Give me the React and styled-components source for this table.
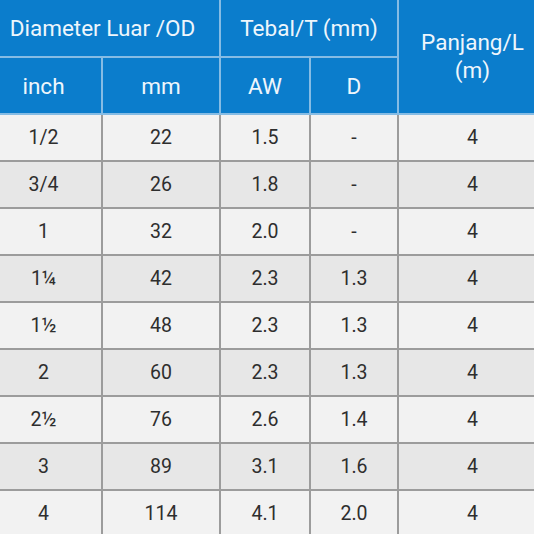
import styled, { createGlobalStyle } from 'styled-components';

const Global = createGlobalStyle`
    html, body {
        margin: 0;
        padding: 0;
        background: #f2f2f2;
        overflow: hidden;
    }
    body {
        font-family: Roboto, "Liberation Sans", sans-serif;
    }
`

const Table = styled.table`
    width: 560px;
    margin-left: -14px;
    border-collapse: collapse;
    table-layout: fixed;
    font-size: 19.5px;
`

const Th = styled.th`
    background: #0b7dcc;
    color: #eef6fc;
    font-weight: 400;
    font-size: 22.5px;
    height: ${p => p.h}px;
    padding: 0;
    text-align: center;
    border: 2px solid #86bce4;
    border-top: none;
    line-height: 28px;
    vertical-align: ${p => p.top ? 'top' : 'middle'};
    padding-top: ${p => p.top ? 28 : 0}px;
    &:first-child { border-left: none; }
    &:last-child { border-right: none; }
`

const Row = styled.tr`
    background: ${p => p.shade ? '#e7e7e7' : '#f2f2f2'};
`

const Td = styled.td`
    height: 45px;
    padding: 0;
    text-align: center;
    color: #2e2e2e;
    border: 2px solid #9c9c9c;
    &:first-child { border-left: none; }
    &:last-child { border-right: none; }
`

const rows = [
    ['1/2', '22', '1.5', '-', '4'],
    ['3/4', '26', '1.8', '-', '4'],
    ['1', '32', '2.0', '-', '4'],
    ['1¼', '42', '2.3', '1.3', '4'],
    ['1½', '48', '2.3', '1.3', '4'],
    ['2', '60', '2.3', '1.3', '4'],
    ['2½', '76', '2.6', '1.4', '4'],
    ['3', '89', '3.1', '1.6', '4'],
    ['4', '114', '4.1', '2.0', '4'],
]

export default function App() {
    return (
        <>
            <Global />
            <Table>
                <colgroup>
                    <col style={{ width: 116 }} />
                    <col style={{ width: 118 }} />
                    <col style={{ width: 90 }} />
                    <col style={{ width: 88 }} />
                    <col style={{ width: 148 }} />
                </colgroup>
                <thead>
                    <tr>
                        <Th colSpan={2} h={56}>Diameter Luar /OD</Th>
                        <Th colSpan={2} h={56}>Tebal/T (mm)</Th>
                        <Th rowSpan={2} top>Panjang/L<br />(m)</Th>
                    </tr>
                    <tr>
                        <Th h={55}>inch</Th>
                        <Th h={55}>mm</Th>
                        <Th h={55}>AW</Th>
                        <Th h={55}>D</Th>
                    </tr>
                </thead>
                <tbody>
                    {rows.map((r, i) => (
                        <Row key={i} shade={i % 2 === 1}>
                            {r.map((c, j) => <Td key={j}>{c}</Td>)}
                        </Row>
                    ))}
                </tbody>
            </Table>
        </>
    )
}
